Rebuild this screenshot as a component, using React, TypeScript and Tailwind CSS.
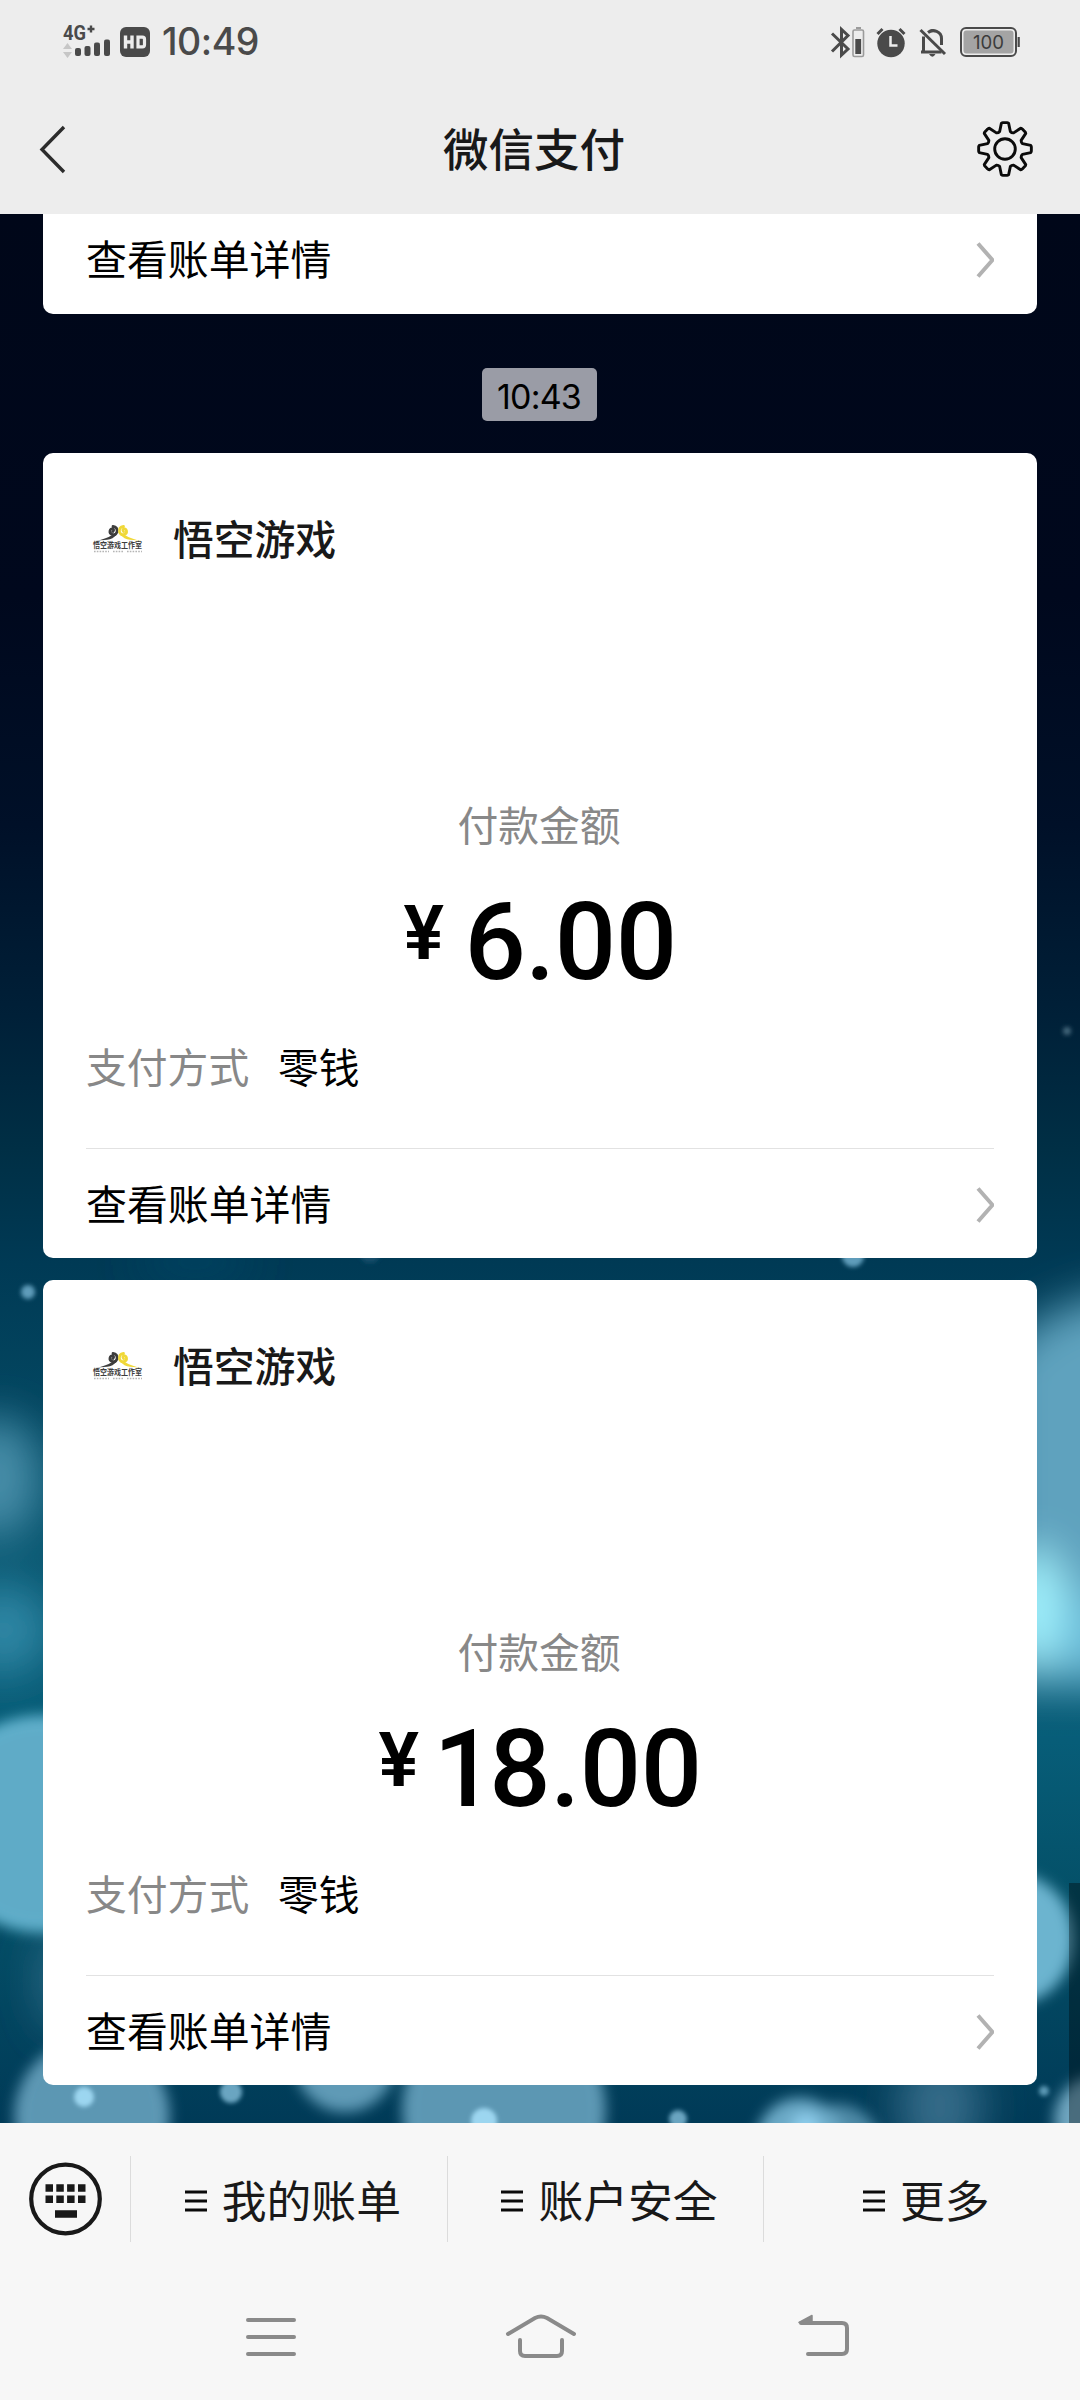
import type { ReactNode } from "react";

interface Payment {
  id: number;
  merchant: string;
  amount: string;
  method: string;
}

const payments: Payment[] = [
  { id: 1, merchant: "悟空游戏", amount: "6.00", method: "零钱" },
  { id: 2, merchant: "悟空游戏", amount: "18.00", method: "零钱" },
];

function StatusBar() {
  return (
    <div className="h-[84px] pl-[62px] pr-[59px] flex items-center justify-between">
      <div className="flex items-center">
        <svg width="50" height="36" viewBox="0 0 50 36" className="mr-2 overflow-visible">
          <text x="1" y="16" fontSize="20" fontWeight="700" fill="#4a4a4a" fontFamily="Roboto, sans-serif" textLength="23" lengthAdjust="spacingAndGlyphs">4G</text>
          <path d="M25.500 5h7M29 1.500v7" stroke="#4a4a4a" strokeWidth="2.400" />
          <path d="M1 25l4.500-6 4.500 6zM1 28h9l-4.500 6z" fill="#c6c6c6" />
          <g fill="#4a4a4a">
            <rect x="13" y="24" width="6" height="8" rx="2" />
            <rect x="22.500" y="22" width="6" height="10" rx="2" />
            <rect x="32" y="18.500" width="6" height="13.500" rx="2" />
            <rect x="42" y="15.500" width="6" height="16.500" rx="2" />
          </g>
        </svg>
        <svg width="30" height="30" viewBox="0 0 30 30">
          <rect width="30" height="30" rx="6" fill="#4a4a4a" />
          <path d="M5.500 8.500v13M12 8.500v13M5.500 15h6.500" stroke="#ededed" strokeWidth="3.400" fill="none" />
          <path d="M18 10.200h4.500q2 0 2 2v5.600q0 2-2 2h-4.500z" stroke="#ededed" strokeWidth="3.200" fill="none" />
        </svg>
        <span className="ml-[12px] font-[Inter,sans-serif] font-medium text-[37.5px] leading-none text-[#4a4a4a] tracking-[-0.5px]">10:49</span>
      </div>
      <svg width="192" height="34" viewBox="829 25 192 34">
        <path d="M832 33.500l16 15.500-6.500 6V29.500l6.500 6-16 16" stroke="#4a4a4a" strokeWidth="3" fill="none" />
        <rect x="853" y="30" width="10.500" height="26.500" rx="1.500" fill="none" stroke="#9b9b9b" strokeWidth="1.600" />
        <path d="M856 28h5" stroke="#9b9b9b" strokeWidth="2" />
        <rect x="855.300" y="39" width="5.800" height="15" fill="#4a4a4a" />
        <circle cx="891" cy="43.500" r="13.700" fill="#4a4a4a" />
        <path d="M877.500 34l5-5M904.500 34l-5-5" stroke="#4a4a4a" strokeWidth="3" />
        <path d="M890.500 36v9.500h7" stroke="#ededed" strokeWidth="2.500" fill="none" />
        <g fill="none" stroke="#4a4a4a" strokeWidth="3">
          <path d="M920.500 30l24.500 24" />
          <path d="M923.500 36.500V52h18M921 52h4M928 32.500c5-4 13.500-1 13.500 6V45" />
        </g>
        <path d="M929.500 31q2.500-4 5 0zM929 54h6.500q-3 5.500-6.500 0z" fill="#4a4a4a" />
        <rect x="961" y="28" width="55" height="28" rx="5" fill="none" stroke="#4a4a4a" strokeWidth="2" />
        <rect x="963.500" y="30.500" width="50" height="23" rx="3" fill="#a4a4a4" />
        <path d="M1018.700 37v10" stroke="#4a4a4a" strokeWidth="2.200" />
        <text x="988.500" y="49" textAnchor="middle" fontSize="19" fontFamily="Inter, sans-serif" fill="#3c3c3c" textLength="31" lengthAdjust="spacingAndGlyphs">100</text>
      </svg>
    </div>
  );
}

function Gear() {
  // eight identical teeth around the hub
  const teeth = Array.from({ length: 8 }, (_, i) => {
    const at = (r: number, deg: number) => {
      const a = ((i * 45 + deg - 90) * Math.PI) / 180;
      return `${(28 + r * Math.cos(a)).toFixed(2)} ${(28 + r * Math.sin(a)).toFixed(2)}`;
    };
    return `${i ? "L" : "M"}${at(18.300, -17)}L${at(26, -8)}Q${at(26.600, -6)} ${at(26.400, -4)}L${at(26.400, 4)}Q${at(26.600, 6)} ${at(26, 8)}L${at(18.300, 17)}Q${at(17.300, 22.5)} ${at(18.300, 28)}`;
  }).join("");
  return (
    <svg width="56" height="56" viewBox="0 0 56 56" fill="none" stroke="#0b0b0b" strokeWidth="2.900" strokeLinejoin="round">
      <path d={teeth + "Z"} />
      <circle cx="28" cy="28" r="10.300" />
    </svg>
  );
}

function Header() {
  return (
    <div className="h-[130px] pl-[38px] pr-[47px] flex items-center justify-between text-[#191919]">
      <svg width="56" height="50" viewBox="0 0 56 50" fill="none" stroke="#2c2c2c" strokeWidth="3.400">
        <path d="M26 3L4 25.500 26 48" />
      </svg>
      <h1 className="mb-[5px] mr-[3px] text-[45.5px] leading-[60px] font-medium">微信支付</h1>
      <Gear />
    </div>
  );
}

function Backdrop() {
  return (
    <svg className="absolute inset-0" width="1080" height="1909" viewBox="0 214 1080 1909">
      <defs>
        <linearGradient id="sea" gradientUnits="userSpaceOnUse" x1="0" y1="214" x2="0" y2="2123">
          <stop offset="0" stopColor="#000719" />
          <stop offset="0.200" stopColor="#00081d" />
          <stop offset="0.320" stopColor="#001028" />
          <stop offset="0.420" stopColor="#002038" />
          <stop offset="0.490" stopColor="#002f45" />
          <stop offset="0.550" stopColor="#003a55" />
          <stop offset="0.620" stopColor="#034660" />
          <stop offset="0.700" stopColor="#0a5872" />
          <stop offset="0.800" stopColor="#075d78" />
          <stop offset="0.880" stopColor="#045068" />
          <stop offset="1" stopColor="#003a57" />
        </linearGradient>
        <filter id="soft" x="-50%" y="-50%" width="200%" height="200%"><feGaussianBlur stdDeviation="22" /></filter>
        <filter id="mid" x="-50%" y="-50%" width="200%" height="200%"><feGaussianBlur stdDeviation="7" /></filter>
        <filter id="dot" x="-50%" y="-50%" width="200%" height="200%"><feGaussianBlur stdDeviation="2" /></filter>
      </defs>
      <rect y="214" width="1080" height="1909" fill="url(#sea)" />

      <g filter="url(#soft)">
        <ellipse cx="-4" cy="1478" rx="44" ry="60" fill="#468da8" />
        <ellipse cx="4" cy="1630" rx="46" ry="46" fill="#2f86a4" />
        <ellipse cx="195" cy="1262" rx="60" ry="14" fill="#0a4565" />
        <ellipse cx="60" cy="1980" rx="18" ry="50" fill="#35718c" />
        <path d="M1000 1360Q1040 1300 1140 1290V1688H1000z" fill="#5fa2be" />
        <ellipse cx="1032" cy="1608" rx="32" ry="58" fill="#a4f4ff" />
        <ellipse cx="1082" cy="1635" rx="26" ry="44" fill="#6cc0dc" />
        <ellipse cx="940" cy="2106" rx="42" ry="60" fill="#346c89" />
      </g>

      <g filter="url(#mid)">
        <circle cx="42" cy="1824" r="105" fill="#5eabc7" stroke="#6cc0dc" strokeWidth="6" />
        <circle cx="92" cy="2116" r="74" fill="#5c97b3" stroke="#6aa3c0" strokeWidth="6" />
        <circle cx="345" cy="2062" r="50" fill="#5f9ab6" />
        <circle cx="504" cy="2110" r="98" fill="#5c97b3" stroke="#6ca5c1" strokeWidth="6" />
        <ellipse cx="1014" cy="1939" rx="60" ry="65" fill="#6cb4cf" />
        <circle cx="838" cy="2146" r="42" fill="#4d89a6" />
        <circle cx="800" cy="2142" r="44" fill="#6aa9c6" />
        <circle cx="806" cy="2128" r="14" fill="#8fcfee" />
        <circle cx="1098" cy="2120" r="44" fill="#6fa6c0" />
      </g>

      <g filter="url(#dot)">
        <circle cx="28" cy="1292" r="7" fill="#5f9cba" />
        <circle cx="1067" cy="1031" r="4" fill="#45677c" />
        <circle cx="853" cy="1256" r="11" fill="#5f9cba" />
        <circle cx="370" cy="1252" r="11" fill="#174e6b" />
        <circle cx="84" cy="2097" r="10" fill="#9cd6f0" />
        <circle cx="231" cy="2092" r="11" fill="#6aa5c1" />
        <circle cx="484" cy="2121" r="13" fill="#9cd6f0" />
        <circle cx="678" cy="2119" r="9" fill="#6aa5c1" />
        <circle cx="1044" cy="2091" r="5" fill="#5d9ab6" />
      </g>
    </svg>
  );
}

function MerchantLogo() {
  return (
    <svg width="54" height="54" viewBox="0 0 54 54" className="overflow-visible">
      <g fill="none" strokeLinecap="round" strokeWidth="2.800">
        <path d="M22 20.500q1.500-2-.5-2.500t-2.500 2 2.500 3.500 4.500-2.500q.8-5-4-5.500" stroke="#3d3d3d" />
        <path d="M32.500 20.500q-1.500-2 .5-2.500t2.500 2-2.500 3.500-4.500-2.500q-.8-5 4-5.500" stroke="#f0d838" />
      </g>
      <path d="M4 30Q15 28 21 24l5-1Q22 28.500 16 28.800t-12 1.200z" fill="#3d3d3d" />
      <path d="M51 30Q40 28 34 24l-5-1q4 5.500 10 5.800t12 1.200z" fill="#f0d838" />
      <text x="2" y="36.500" fontSize="8" fontWeight="700" fill="#3d3d3d" fontFamily="'Noto Sans CJK SC', sans-serif" textLength="49" lengthAdjust="spacingAndGlyphs">悟空游戏工作室</text>
      <path d="M3 40.500h15M22 40.500h10M36 40.500h15" stroke="#b5b5b5" strokeWidth="1.600" strokeDasharray="1.600 1.200" />
    </svg>
  );
}

function DetailRow() {
  return (
    <div className="flex items-center justify-between">
      <span className="mb-[3px] text-[40.9px] leading-[60px] text-black">查看账单详情</span>
      <svg width="22" height="40" viewBox="0 0 22 40" fill="none" stroke="#b2b2b2" strokeWidth="4">
        <path d="M6 3.500L20.500 20 6 36.500" />
      </svg>
    </div>
  );
}

function Amount({ value }: { value: string }) {
  return (
    <span className="flex text-[108px] leading-[110px] tracking-[-0.5px]">
      {value.split("").map((char, i) => (
        <span key={i} className={char === "1" ? "-ml-[6px] -mr-[5px]" : ""}>{char}</span>
      ))}
    </span>
  );
}

function PaymentCard({ payment }: { payment: Payment }) {
  return (
    <div className="h-[805px] bg-white rounded-[10px] px-[43px] flex flex-col">
      <div className="mt-[58px] flex items-center h-[54px]">
        <div className="ml-[5px] w-[54px]">
          <MerchantLogo />
        </div>
        <span className="ml-[28px] text-[40.8px] leading-[54px] font-medium text-[#191919]">{payment.merchant}</span>
      </div>
      <div className="mt-[229px] mr-[2px] text-center text-[40.8px] leading-[60px] text-[#888888]">付款金额</div>
      <div className="mt-[33px] h-[110px] flex justify-center items-start text-black font-[Roboto,sans-serif] font-medium">
        <span className="mt-[8px] mr-[17px] text-[76px] leading-[76px] w-[44px] font-semibold">¥</span>
        <Amount value={payment.amount} />
      </div>
      <div className="mt-[39px] flex text-[40.8px] leading-[60px]">
        <span className="text-[#888888] w-[192px]">支付方式</span>
        <span className="text-black">{payment.method}</span>
      </div>
      <div className="mt-[52px] mb-[24px] h-px shrink-0 bg-[#e2e2e2]" />
      <DetailRow />
    </div>
  );
}

function MenuTab({ children }: { children: ReactNode }) {
  return (
    <button className="flex-1 h-[86px] pl-[8px] border-l border-[#dcdcdc] flex items-center justify-center gap-[15px] text-[#191919]">
      <svg className="mt-[3px]" width="22" height="22" viewBox="0 0 22 22" stroke="#0a0a0a" strokeWidth="3">
        <path d="M0 2h22M0 11h22M0 20h22" />
      </svg>
      <span className="text-[44.8px] leading-[60px]">{children}</span>
    </button>
  );
}

function NavBar() {
  return (
    <div className="flex-1 pl-[242px] pt-[37px] flex items-start">
      <svg width="58" height="50" viewBox="242 2312 58 50" stroke="#8a8a8a" strokeWidth="4" strokeLinecap="round">
        <path d="M248 2320h46M248 2337h46M248 2354h46" />
      </svg>
      <svg className="ml-[203px]" width="76" height="50" viewBox="503 2312 76 50" fill="none" stroke="#8a8a8a" strokeWidth="4" strokeLinecap="round">
        <path d="M508 2334l27-16q6-3 12 0l27 16" />
        <path d="M520 2340v11q0 5 5 5h32q5 0 5-5v-11" />
      </svg>
      <svg className="ml-[217px]" width="56" height="50" viewBox="796 2312 56 50" fill="none" stroke="#8a8a8a" strokeWidth="4" strokeLinecap="round">
        <path d="M801 2323h41q5 0 5 5v21q0 5-5 5h-34" />
        <path d="M799 2322.500l13-7v8z" fill="#8a8a8a" strokeWidth="1.500" strokeLinejoin="round" />
      </svg>
    </div>
  );
}

export default function App() {
  return (
    <div className="w-[1080px] h-[2400px] flex flex-col overflow-hidden bg-[#f7f7f7] font-['Noto_Sans_CJK_SC',sans-serif]">
      <header className="h-[214px] bg-[#ededed]">
        <StatusBar />
        <Header />
      </header>

      <main className="relative h-[1909px] overflow-hidden">
        <Backdrop />
        <div className="relative px-[43px]">
          <div className="h-[100px] bg-white rounded-b-[10px] px-[43px] pt-[14px]">
            <DetailRow />
          </div>
          <div className="h-[139px] pt-[54px] pr-[2px] flex justify-center items-start">
            <span className="w-[115px] h-[53px] rounded-[5px] bg-[#9a9ca6] text-center font-[Inter,sans-serif] text-[34px] leading-[58px] tracking-[-0.8px] text-black">10:43</span>
          </div>
          <div className="space-y-[22px]">
            {payments.map((p) => (
              <PaymentCard key={p.id} payment={p} />
            ))}
          </div>
        </div>
        {/* Scroll thumb */}
        <div className="absolute right-0 bottom-0 w-[11px] h-[240px] bg-black/35" />
      </main>

      <footer className="flex-1 flex flex-col">
        <div className="h-[152px] flex items-center">
          <div className="w-[130px] pl-[29px]">
            <svg width="73" height="74" viewBox="0 0 73 74">
              <circle cx="36.500" cy="37" r="34.300" fill="none" stroke="#191919" strokeWidth="4.200" />
              <path d="M16.500 26h7.500M27.300 26h7.500M38.100 26h7.500M49 26h7.500M16.500 37.300h7.500M27.300 37.300h7.500M38.100 37.300h7.500M49 37.300h7.500M26 52h22" stroke="#191919" strokeWidth="7.500" />
            </svg>
          </div>
          <MenuTab>我的账单</MenuTab>
          <MenuTab>账户安全</MenuTab>
          <MenuTab>更多</MenuTab>
        </div>
        <NavBar />
      </footer>
    </div>
  );
}
